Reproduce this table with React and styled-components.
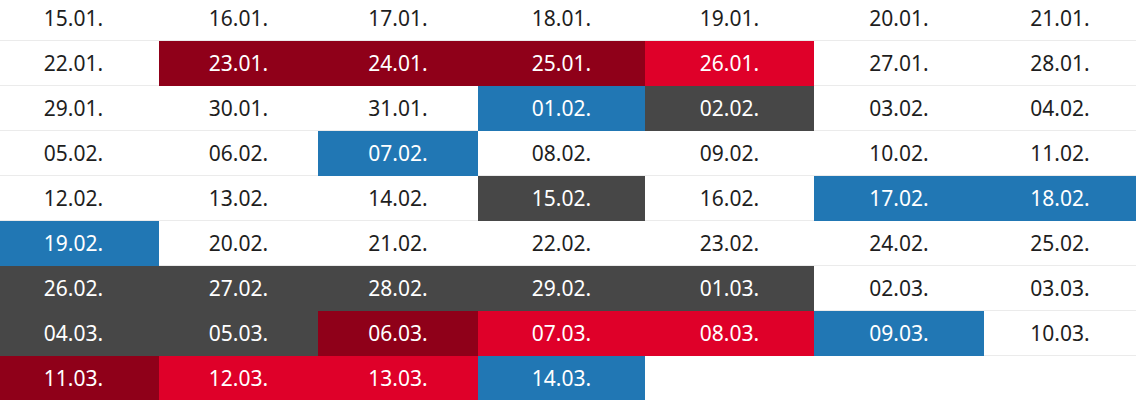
import React from "react";
import styled, { createGlobalStyle } from "styled-components";

const COLORS = {
  w: "transparent",
  dr: "#8f0019",
  r: "#df0029",
  b: "#2177b4",
  g: "#474747",
};

const rows = [
  [["15.01.", "w"], ["16.01.", "w"], ["17.01.", "w"], ["18.01.", "w"], ["19.01.", "w"], ["20.01.", "w"], ["21.01.", "w"]],
  [["22.01.", "w"], ["23.01.", "dr"], ["24.01.", "dr"], ["25.01.", "dr"], ["26.01.", "r"], ["27.01.", "w"], ["28.01.", "w"]],
  [["29.01.", "w"], ["30.01.", "w"], ["31.01.", "w"], ["01.02.", "b"], ["02.02.", "g"], ["03.02.", "w"], ["04.02.", "w"]],
  [["05.02.", "w"], ["06.02.", "w"], ["07.02.", "b"], ["08.02.", "w"], ["09.02.", "w"], ["10.02.", "w"], ["11.02.", "w"]],
  [["12.02.", "w"], ["13.02.", "w"], ["14.02.", "w"], ["15.02.", "g"], ["16.02.", "w"], ["17.02.", "b"], ["18.02.", "b"]],
  [["19.02.", "b"], ["20.02.", "w"], ["21.02.", "w"], ["22.02.", "w"], ["23.02.", "w"], ["24.02.", "w"], ["25.02.", "w"]],
  [["26.02.", "g"], ["27.02.", "g"], ["28.02.", "g"], ["29.02.", "g"], ["01.03.", "g"], ["02.03.", "w"], ["03.03.", "w"]],
  [["04.03.", "g"], ["05.03.", "g"], ["06.03.", "dr"], ["07.03.", "r"], ["08.03.", "r"], ["09.03.", "b"], ["10.03.", "w"]],
  [["11.03.", "dr"], ["12.03.", "r"], ["13.03.", "r"], ["14.03.", "b"]],
];

const GlobalStyle = createGlobalStyle`
  body {
    margin: 0;
    background: #ffffff;
    overflow: hidden;
    font-family: "Noto Sans", "Open Sans", sans-serif;
  }
`;

const Calendar = styled.div`
  width: 1148px;
  margin: -4px 0 0 -12px;
`;

const Week = styled.div`
  display: grid;
  grid-template-columns: 171px 159px 160px 167px 169px 170px 152px;
  height: 45px;
  box-shadow: inset 0 -1px 0 #ebebeb;
`;

const Day = styled.div`
  display: flex;
  align-items: center;
  justify-content: center;
  background: ${(p) => COLORS[p.tone]};
  color: ${(p) => (p.tone === "w" ? "#1e1e1e" : "#ffffff")};
  font-size: 21px;
  padding-bottom: 1px;
`;

export default function App() {
  return (
    <>
      <GlobalStyle />
      <Calendar>
        {rows.map((week, i) => (
          <Week key={i}>
            {week.map(([label, tone]) => (
              <Day key={label} tone={tone}>
                {label}
              </Day>
            ))}
          </Week>
        ))}
      </Calendar>
    </>
  );
}
